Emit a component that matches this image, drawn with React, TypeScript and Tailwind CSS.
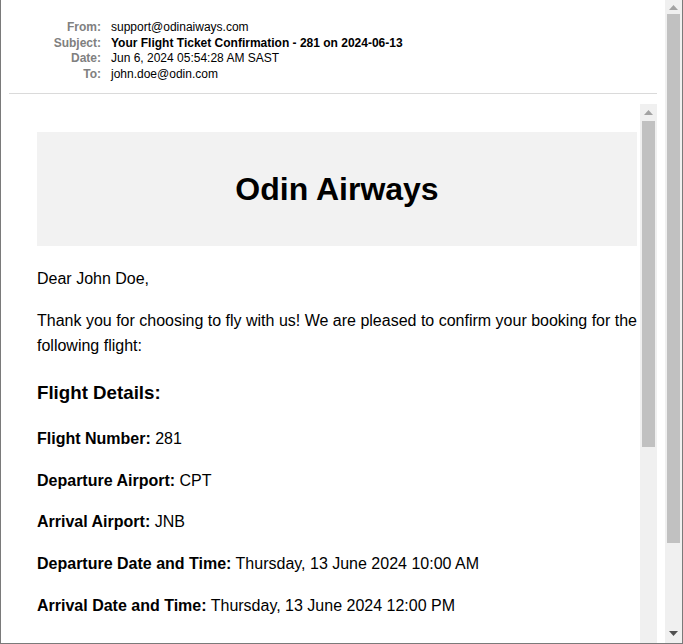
import React from "react";

function UpArrow({ color }: { color: string }) {
  return (
    <svg width="9" height="5" viewBox="0 0 9 5" className="block">
      <polygon points="0,5 9,5 4.5,0" fill={color} />
    </svg>
  );
}

function DownArrow({ color }: { color: string }) {
  return (
    <svg width="9" height="5" viewBox="0 0 9 5" className="block">
      <polygon points="0,0 9,0 4.5,5" fill={color} />
    </svg>
  );
}

const rows: { label: string; value: string; bold?: boolean }[] = [
  { label: "From:", value: "support@odinaiways.com" },
  { label: "Subject:", value: "Your Flight Ticket Confirmation - 281 on 2024-06-13", bold: true },
  { label: "Date:", value: "Jun 6, 2024 05:54:28 AM SAST" },
  { label: "To:", value: "john.doe@odin.com" },
];

const details: [string, string][] = [
  ["Flight Number:", "281"],
  ["Departure Airport:", "CPT"],
  ["Arrival Airport:", "JNB"],
  ["Departure Date and Time:", "Thursday, 13 June 2024 10:00 AM"],
  ["Arrival Date and Time:", "Thursday, 13 June 2024 12:00 PM"],
];

export default function App() {
  return (
    <div className="w-[683px] h-[644px] flex bg-white border-l border-r border-b border-[#7a7a7a] overflow-hidden box-border">
      <div className="flex-1 min-w-0 flex flex-col">
        <div
          className="pt-[20px] grid grid-cols-[100px_1fr] gap-x-[10px] text-[12px] leading-[15.5px]"
          style={{ fontFamily: '"Liberation Sans", Arial, sans-serif' }}
        >
          {rows.map((r) => (
            <React.Fragment key={r.label}>
              <div className="text-right font-bold text-[#808080]">{r.label}</div>
              <div className={r.bold ? "font-bold text-black whitespace-nowrap" : "text-black whitespace-nowrap"}>
                {r.value}
              </div>
            </React.Fragment>
          ))}
        </div>
        <div className="mt-[11px] mx-[8px] h-px bg-[#dadada]" />
        <div className="mt-[10px] mx-[8px] flex-1 min-h-0 flex">
          <div
            className="flex-1 min-w-0 overflow-hidden pl-[28px] pt-[28px] text-black"
            style={{ fontFamily: '"Liberation Sans", Arial, sans-serif' }}
          >
            <div className="w-[600px] text-[16px] leading-[1.6]">
              <div className="h-[114px] bg-[#f2f2f2] flex items-center justify-center mb-[20px]">
                <h1 className="text-[32px] font-bold leading-[37px]">Odin Airways</h1>
              </div>
              <p className="mb-4">Dear John Doe,</p>
              <p className="mb-[18.72px]">
                Thank you for choosing to fly with us! We are pleased to confirm your booking for the following flight:
              </p>
              <h3 className="text-[18.72px] font-bold mb-[18.72px]">Flight Details:</h3>
              {details.map(([k, v]) => (
                <p key={k} className="mb-4 whitespace-nowrap">
                  <strong className="font-bold">{k}</strong> {v}
                </p>
              ))}
            </div>
          </div>
          <div className="w-[17px] shrink-0 bg-[#f0f0f0] flex flex-col items-center">
            <div className="h-[17px] w-full flex items-center justify-center">
              <UpArrow color="#a3a3a3" />
            </div>
            <div className="w-[13px] h-[326px] bg-[#c1c1c1]" />
          </div>
        </div>
      </div>
      <div className="w-[17px] shrink-0 bg-[#f0f0f0] flex flex-col items-center">
        <div className="h-[14px] w-full flex items-center justify-center">
          <UpArrow color="#a3a3a3" />
        </div>
        <div className="w-[13px] h-[529px] bg-[#c1c1c1]" />
        <div className="flex-1" />
        <div className="h-[17px] w-full flex items-center justify-center pb-[2px]">
          <DownArrow color="#505050" />
        </div>
      </div>
    </div>
  );
}
